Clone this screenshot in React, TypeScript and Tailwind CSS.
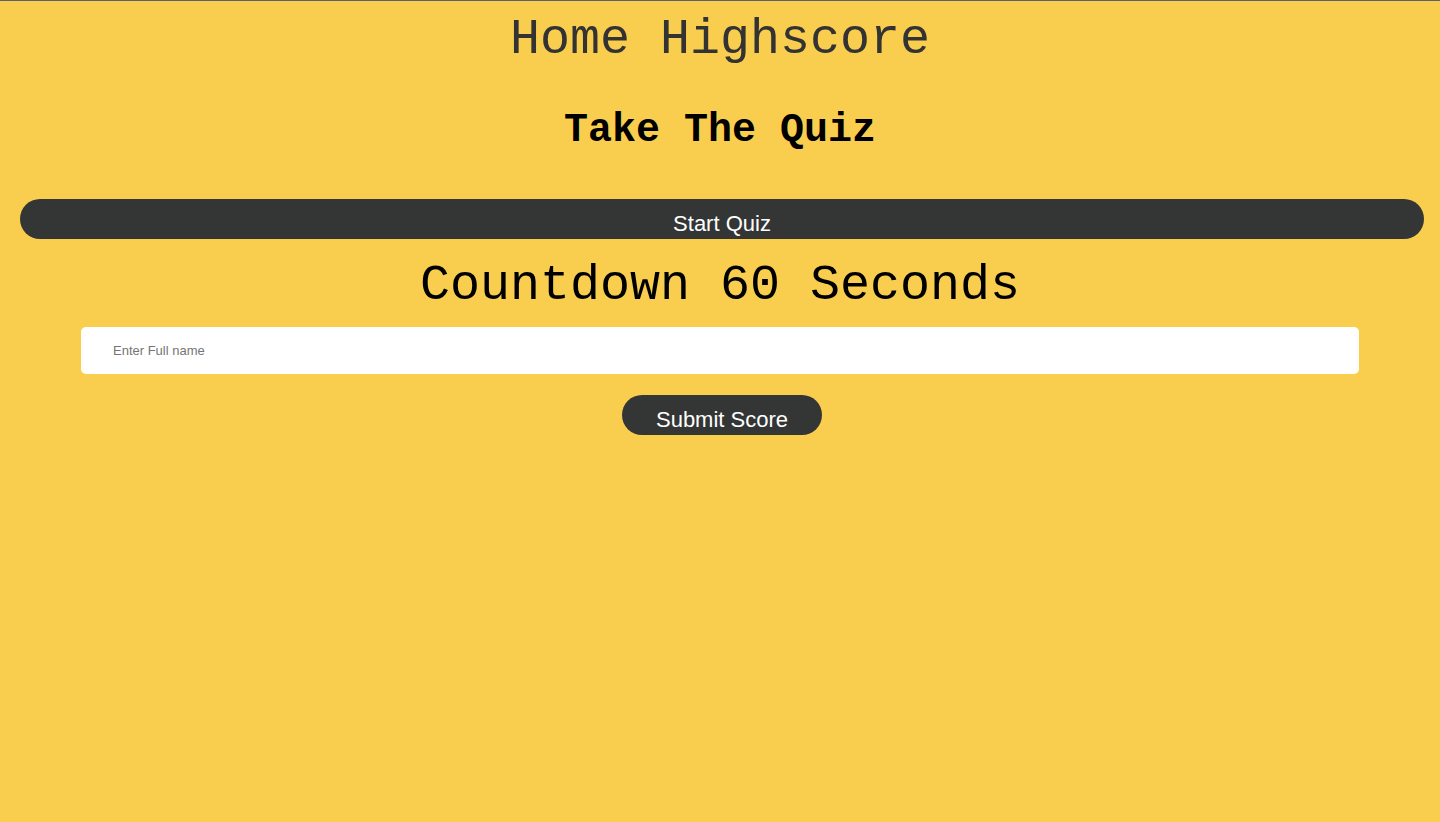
import React from "react";

export default function App() {
  return (
    <div className="min-h-[822px] w-full bg-[#f9ce4f] border-t border-[#5b6170] flex flex-col">
      <nav className="mt-[14px] text-center text-[50px] leading-[50px] text-[#333333] font-['Liberation_Mono','Courier_New',monospace]">
        <a className="cursor-pointer">Home</a> <a className="cursor-pointer">Highscore</a>
      </nav>
      <h1 className="mt-[46px] text-center text-[40px] leading-[40px] font-bold text-black font-['Liberation_Mono','Courier_New',monospace]">
        Take The Quiz
      </h1>
      <button className="mt-[48px] ml-[20px] w-[1404px] h-[40px] rounded-full bg-[#343535] text-white text-[22px] leading-[22px] pt-[10px] font-['Liberation_Sans',Arial,sans-serif]">
        Start Quiz
      </button>
      <h2 className="mt-[22px] text-center text-[50px] leading-[50px] text-black font-['Liberation_Mono','Courier_New',monospace]">
        Countdown 60 Seconds
      </h2>
      <div className="mt-[16px] flex justify-center">
        <input
          className="w-[1278px] h-[47px] rounded-[5px] bg-white pl-[32px] text-[13px] text-black placeholder:text-[#757575] outline-none font-['Liberation_Sans',Arial,sans-serif]"
          placeholder="Enter Full name"
        />
      </div>
      <div className="mt-[21px] pl-[4px] flex justify-center">
        <button className="w-[200px] h-[40px] rounded-full bg-[#343535] text-white text-[22px] leading-[22px] pt-[9px] font-['Liberation_Sans',Arial,sans-serif]">
          Submit Score
        </button>
      </div>
    </div>
  );
}
